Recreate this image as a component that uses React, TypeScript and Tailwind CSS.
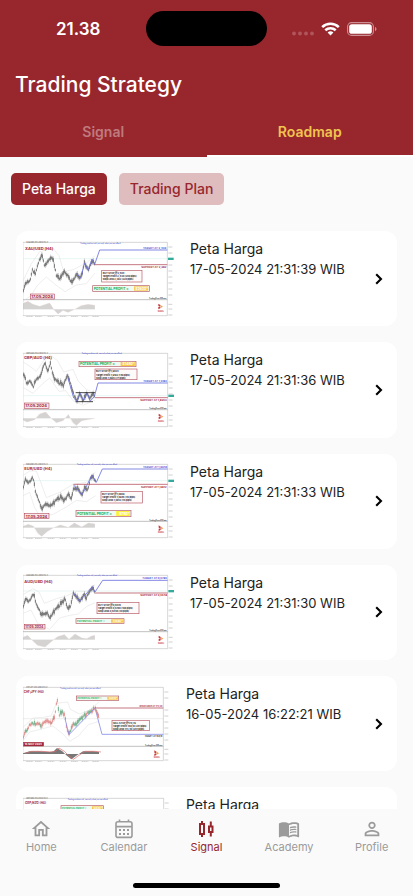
import React from "react";
import { MdMenuBook, MdOutlineHome, MdPersonOutline } from "react-icons/md";

type Pt = [number, number];

interface Label {
  x: number;
  y: number;
  text: string;
  size: number;
  color: string;
  anchor?: "start" | "end";
}

interface ChartSpec {
  w: number;
  axis: number;
  pair: string;
  pairAt: Pt;
  date: string;
  dateBox: [number, number, number, number];
  solidDate?: boolean;
  price: Pt[];
  colored?: boolean;
  band: Pt[][];
  plan: Pt[];
  planEnd: number;
  level: { y: number; from: number; to: number };
  labels: Label[];
  info: { x: number; y: number; w: number; h: number; lines: string[] };
  profit: { x: number; y: number; w: number; h: number; value: string; size: number; yellow?: boolean };
  now: number;
  split: number;
  hist: Pt[];
  zero: number;
  note: Pt;
  box?: [number, number, number, number];
}

interface Signal {
  title: string;
  time: string;
  chart: ChartSpec;
}

const RED = "#a3293a";
const BLUE = "#4a51d6";

const charts: ChartSpec[] = [
  {
    w: 453, axis: 433, pair: "XAU/USD (H4)", pairAt: [6, 26],
    date: "17.05.2024", dateBox: [22, 159, 72, 15],
    price: [[0, 148], [12, 118], [20, 122], [28, 88], [36, 98], [46, 68], [56, 38], [64, 76], [76, 62], [86, 50], [92, 62], [100, 106], [112, 112], [122, 92], [132, 104], [142, 118], [150, 122], [160, 98], [170, 110], [178, 92], [184, 66], [196, 88], [207, 58], [216, 70]],
    band: [[[0, 120], [24, 70], [50, 32], [90, 22], [108, 44], [122, 92], [150, 86], [190, 66], [216, 44]], [[0, 180], [24, 164], [44, 132], [70, 108], [96, 130], [126, 152], [160, 132], [190, 128], [216, 96]]],
    plan: [[162, 98], [174, 112], [184, 66], [195, 88], [207, 54], [215, 70], [230, 27]], planEnd: 433,
    level: { y: 71, from: 213, to: 433 },
    labels: [{ x: 430, y: 23, text: "TARGET AT 2,430", size: 8, color: BLUE, anchor: "end" }, { x: 430, y: 81, text: "SUPPORT AT 2,382", size: 8, color: RED, anchor: "end" }],
    info: { x: 236, y: 88, w: 121, h: 35, lines: ["BUY STOP @2,404", "Target Profit 2,430 (260 pips)", "Stop Loss 2,382 (220 pips)"] },
    profit: { x: 209, y: 134, w: 170, h: 17, value: "$2600*", size: 10 },
    now: 53, split: 176,
    hist: [[0, 187], [15, 181], [30, 190], [50, 196], [80, 186], [92, 205], [105, 219], [120, 208], [135, 214], [155, 205], [175, 194], [195, 190], [216, 193]], zero: 205,
    note: [172, 8],
  },
  {
    w: 453, axis: 434, pair: "GBP/AUD (H4)", pairAt: [3, 22],
    date: "17.05.2024", dateBox: [4, 153, 74, 16],
    price: [[0, 62], [10, 90], [22, 88], [30, 106], [38, 82], [48, 80], [56, 58], [66, 34], [74, 62], [82, 36], [90, 72], [98, 86], [112, 94], [122, 100], [132, 72], [142, 92], [152, 130], [162, 146], [170, 122], [180, 146], [190, 124], [200, 140], [208, 124], [216, 134]],
    band: [[[0, 30], [20, 42], [40, 58], [62, 26], [80, 8], [104, 26], [122, 60], [150, 52], [166, 88], [190, 112], [216, 124]], [[0, 106], [30, 124], [60, 94], [80, 78], [108, 118], [128, 116], [150, 146], [180, 160], [216, 144]]],
    plan: [[132, 68], [152, 138], [162, 148], [172, 124], [182, 146], [192, 124], [202, 147], [214, 134], [225, 93]], planEnd: 434,
    level: { y: 137, from: 216, to: 434 },
    labels: [{ x: 432, y: 89, text: "TARGET AT 1,9182", size: 8, color: BLUE, anchor: "end" }, { x: 431, y: 148, text: "SUPPORT AT 1,8963", size: 8, color: RED, anchor: "end" }],
    info: { x: 216, y: 51, w: 126, h: 32, lines: ["BUY STOP @1,9034", "Target Profit 1,9182 (148 pips)", "Stop Loss 1,8963 (71 pips)"] },
    profit: { x: 168, y: 28, w: 171, h: 16, value: "$1480*", size: 10 },
    now: 131, split: 173,
    hist: [[0, 204], [12, 210], [35, 203], [50, 186], [68, 180], [84, 198], [100, 212], [120, 206], [136, 188], [150, 212], [160, 220], [176, 206], [216, 199]], zero: 199,
    note: [176, 6], box: [158, 122, 58, 27],
  },
  {
    w: 453, axis: 434, pair: "EUR/USD (H4)", pairAt: [4, 22],
    date: "17.05.2024", dateBox: [5, 152, 73, 15],
    price: [[0, 72], [8, 48], [18, 58], [30, 44], [38, 88], [48, 118], [58, 138], [68, 124], [80, 132], [92, 120], [104, 108], [114, 102], [124, 114], [136, 96], [144, 106], [152, 78], [164, 74], [176, 94], [186, 72], [194, 84], [202, 46], [208, 38], [218, 58]],
    band: [[[0, 38], [20, 24], [40, 24], [54, 60], [70, 104], [110, 88], [150, 64], [190, 58], [218, 26]], [[0, 98], [20, 88], [34, 132], [52, 162], [90, 154], [130, 132], [160, 112], [190, 116], [218, 98]]],
    plan: [[152, 66], [177, 96], [207, 36], [220, 58], [238, 18]], planEnd: 434,
    level: { y: 64, from: 151, to: 434 },
    labels: [{ x: 433, y: 15, text: "TARGET AT 1,0946", size: 8, color: BLUE, anchor: "end" }, { x: 431, y: 74, text: "SUPPORT AT 1,0812", size: 8, color: RED, anchor: "end" }],
    info: { x: 234, y: 85, w: 124, h: 35, lines: ["BUY STOP @1,0868", "Target Profit 1,0946 (78 pips)", "Stop Loss 1,0812 (56 pips)"] },
    profit: { x: 159, y: 142, w: 165, h: 19, value: "$780*", size: 10, yellow: true },
    now: 53, split: 175,
    hist: [[0, 190], [16, 184], [32, 190], [44, 210], [56, 220], [72, 206], [90, 195], [112, 186], [136, 193], [154, 180], [176, 192], [196, 180], [216, 183]], zero: 194,
    note: [162, 6],
  },
  {
    w: 453, axis: 434, pair: "AUD/USD (H4)", pairAt: [4, 26],
    date: "17.05.2024", dateBox: [4, 152, 62, 13],
    price: [[0, 96], [10, 72], [18, 82], [32, 60], [42, 98], [52, 116], [62, 124], [72, 118], [80, 136], [90, 116], [104, 100], [116, 86], [126, 76], [134, 108], [142, 96], [150, 60], [160, 66], [170, 80], [182, 62], [190, 72], [200, 52], [208, 40], [216, 56]],
    band: [[[0, 62], [30, 44], [48, 54], [64, 88], [100, 74], [130, 66], [160, 52], [190, 52], [216, 32]], [[0, 118], [24, 108], [44, 148], [80, 166], [110, 132], [140, 124], [166, 120], [190, 98], [216, 86]]],
    plan: [[151, 56], [170, 82], [208, 38], [216, 54], [239, 19]], planEnd: 434,
    level: { y: 57, from: 215, to: 434 },
    labels: [{ x: 432, y: 16, text: "TARGET AT 0,6786", size: 8, color: BLUE, anchor: "end" }, { x: 433, y: 67, text: "SUPPORT AT 0,6648", size: 8, color: RED, anchor: "end" }],
    info: { x: 222, y: 85, w: 126, h: 34, lines: ["BUY STOP @0,6678", "Target Profit 0,6786 (108 pips)", "Stop Loss 0,6648 (30 pips)"] },
    profit: { x: 159, y: 134, w: 144, h: 14, value: "$1080*", size: 8 },
    now: 51, split: 173,
    hist: [[0, 190], [14, 184], [26, 197], [44, 214], [66, 219], [86, 202], [104, 188], [124, 182], [138, 196], [156, 180], [176, 192], [192, 194], [206, 186], [216, 184]], zero: 197,
    note: [162, 6],
  },
  {
    w: 441, axis: 421, pair: "CHF/JPY (H4)", pairAt: [2, 22],
    date: "16 MAY 2024", dateBox: [2, 169, 60, 11], solidDate: true, colored: true,
    price: [[0, 152], [10, 132], [20, 116], [36, 112], [56, 118], [70, 106], [84, 114], [96, 88], [102, 38], [108, 86], [118, 78], [126, 92], [132, 136], [138, 146], [146, 120], [160, 112], [172, 96], [186, 88], [200, 78], [216, 66], [222, 78], [228, 96]],
    band: [[[0, 124], [30, 96], [60, 94], [84, 90], [100, 52], [134, 48], [142, 70], [170, 84], [200, 72], [228, 48]], [[0, 164], [20, 138], [60, 128], [90, 120], [120, 144], [140, 166], [166, 150], [196, 116], [228, 106]]],
    plan: [[126, 98], [138, 146], [216, 66], [237, 145]], planEnd: 421,
    level: { y: 66, from: 216, to: 421 },
    labels: [{ x: 418, y: 64, text: "RESISTANCE AT 173,40", size: 6, color: RED, anchor: "end" }, { x: 418, y: 153, text: "TARGET AT 168,18", size: 6, color: "#333", anchor: "end" }],
    info: { x: 267, y: 103, w: 112, h: 31, lines: ["SELL STOP @170,79", "Target Profit 168,18 (261 pips)", "Stop Loss 173,40 (261 pips)"] },
    profit: { x: 160, y: 30, w: 127, h: 13, value: "$2610*", size: 7 },
    now: 98, split: 181,
    hist: [[0, 202], [20, 196], [50, 196], [80, 198], [92, 196], [102, 186], [118, 196], [130, 208], [145, 220], [162, 208], [180, 196], [210, 196], [228, 198]], zero: 204,
    note: [112, 8],
  },
  {
    w: 441, axis: 422, pair: "GBP/NZD (H4)", pairAt: [6, 22],
    date: "16 MAY 2024", dateBox: [2, 169, 60, 11], solidDate: true, colored: true,
    price: [[0, 140], [40, 100], [90, 110], [140, 70], [228, 90]],
    band: [], plan: [[140, 80], [216, 66], [237, 145]], planEnd: 422,
    level: { y: 76, from: 216, to: 422 },
    labels: [],
    info: { x: 267, y: 103, w: 112, h: 31, lines: ["SELL STOP @2,0650"] },
    profit: { x: 114, y: 26, w: 127, h: 13, value: "$1840*", size: 7 },
    now: 98, split: 181, hist: [[0, 200], [228, 200]], zero: 204,
    note: [134, 8],
  },
];

const times = [
  "17-05-2024 21:31:39 WIB",
  "17-05-2024 21:31:36 WIB",
  "17-05-2024 21:31:33 WIB",
  "17-05-2024 21:31:30 WIB",
  "16-05-2024 16:22:21 WIB",
  "16-05-2024 16:22:18 WIB",
];

const signals: Signal[] = charts.map((chart, i) => ({ title: "Peta Harga", time: times[i], chart }));

const toPath = (pts: Pt[]) => pts.map(([x, y], i) => `${i ? "L" : "M"}${x} ${y}`).join("");

function valueAt(pts: Pt[], x: number) {
  for (let i = 1; i < pts.length; i++) {
    const [x0, y0] = pts[i - 1];
    const [x1, y1] = pts[i];
    if (x <= x1) return y0 + ((y1 - y0) * (x - x0)) / (x1 - x0);
  }
  return pts[pts.length - 1][1];
}

function jitter(n: number) {
  const v = Math.sin(n * 12.9898) * 43758.5453;
  return v - Math.floor(v) - 0.5;
}

function Candles({ spec }: { spec: ChartSpec }) {
  const end = spec.price[spec.price.length - 1][0];
  const bars: React.ReactElement[] = [];
  for (let x = 1; x <= end; x += 3) {
    const mid = valueAt(spec.price, x) + jitter(x) * 7;
    const reach = 6 + Math.abs(jitter(x + 7)) * 12;
    const up = jitter(x + 3) > -0.1;
    const color = spec.colored ? (up ? "#4f9a6c" : "#dc7070") : "#4b4b4b";
    bars.push(
      <g key={x}>
        <path d={`M${x} ${mid - reach}V${mid + reach}`} stroke={color} strokeWidth={1.2} opacity={0.7} />
        <path d={`M${x} ${mid - reach / 2}V${mid + reach / 2}`} stroke={color} strokeWidth={2.2} />
      </g>,
    );
  }
  return <g>{bars}</g>;
}

function Histogram({ spec }: { spec: ChartSpec }) {
  const end = spec.hist[spec.hist.length - 1][0];
  if (spec.colored) {
    return (
      <g>
        <path d={`M0 ${spec.zero}${toPath(spec.hist).replace("M", "L")}L${end} ${spec.zero}Z`} fill="#777" />
        <path d={toPath(spec.hist)} fill="none" stroke="#e06a6a" strokeWidth={2} transform="translate(6 0)" />
      </g>
    );
  }
  let d = "";
  for (let x = 1; x <= end; x += 3) d += `M${x} ${spec.zero}V${valueAt(spec.hist, x)}`;
  return (
    <g fill="none">
      <path d={d} stroke="#b9b6b6" strokeWidth={2} />
      <path d={toPath(spec.hist)} stroke="#e6d3d3" strokeWidth={1} />
    </g>
  );
}

function Chart({ spec }: { spec: ChartSpec }) {
  const { axis, info, profit, dateBox, level } = spec;
  const ticks = [18, 36, 72, 90, 108, 126, 144, 162, 190, 204, 222];
  return (
    <svg
      viewBox={`0 0 ${spec.w} 228`}
      className="h-[76px] w-auto shrink-0"
      fontFamily="Inter, sans-serif"
      fontWeight={700}
      role="img"
      aria-label={spec.pair}
    >
      <g fill="none" stroke="#a8a8a8" strokeWidth={1.4}>
        <path d={`M0 4H${axis}V224`} />
        <path d={`M0 224H${axis}`} />
        <path d="M0 4V224" stroke="#bdbdbd" />
      </g>
      <path d={`M0 ${spec.split}H${axis}`} stroke="#999" strokeWidth={1.8} />
      <path d={`M0 ${spec.now}H${axis}`} stroke={spec.colored ? "#ccc" : "#b5e5df"} strokeWidth={1} />
      {!spec.colored && <rect x={axis + 2} y={spec.now - 3} width={17} height={7} fill="#35a99a" />}
      {ticks.map((y) => (
        <path key={y} d={`M${axis + 3} ${y}H${axis + 15}`} stroke="#b9b9b9" strokeWidth={2} />
      ))}
      {[10, 36, 74, 110, 144, 176, 208].map((x) => (
        <path key={x} d={`M${x} 227H${x + 20}`} stroke="#b5b5b5" strokeWidth={2} strokeDasharray="5 1" />
      ))}
      {spec.band.map((b, i) => (
        <polyline key={i} points={b.map((p) => p.join(",")).join(" ")} fill="none" stroke="#dcdcdc" strokeWidth={1.5} strokeLinejoin="round" />
      ))}
      <Candles spec={spec} />
      <Histogram spec={spec} />
      {spec.box && (
        <path
          d={`M${spec.box[0]} ${spec.box[1]}h${spec.box[2]}M${spec.box[0]} ${spec.box[1] + spec.box[3]}h${spec.box[2] - 6}`}
          stroke="#222"
          strokeWidth={2.5}
        />
      )}
      <path d={`M${level.from} ${level.y}H${level.to}`} stroke="#b04555" strokeWidth={2.2} />
      <path
        d={`${toPath(spec.plan)}H${spec.planEnd}`}
        fill="none"
        stroke={spec.colored ? "#8a8ee8" : "#6a70dd"}
        strokeWidth={2.5}
        strokeLinejoin="round"
      />
      {spec.colored && <path d={`M216 ${level.y}L228 96`} stroke="#e58a8a" strokeWidth={3} />}
      <text x={10} y={7} fontSize={5} fill="#777">{spec.pair} 240 O H L C</text>
      <text x={spec.note[0]} y={spec.note[1] + 1} fontSize={5} fontWeight={500} fill="#3f46d0">
        Trading involves risk, use only what you can afford
      </text>
      <text x={spec.pairAt[0]} y={spec.pairAt[1]} fontSize={spec.colored ? 9 : 12} fill={RED}>{spec.pair}</text>
      <rect x={dateBox[0]} y={dateBox[1]} width={dateBox[2]} height={dateBox[3]} fill={spec.solidDate ? RED : "#f8e6e8"} stroke={RED} strokeWidth={1.5} />
      <text x={dateBox[0] + 3} y={dateBox[1] + dateBox[3] - 3} fontSize={spec.solidDate ? 8 : dateBox[2] < 70 ? 10 : 12} fill={spec.solidDate ? "#fff" : RED}>
        {spec.date}
      </text>
      {spec.labels.map((l) => (
        <text key={l.text} x={l.x} y={l.y} fontSize={l.size} fill={l.color} textAnchor={l.anchor}>{l.text}</text>
      ))}
      <rect x={info.x} y={info.y} width={info.w} height={info.h} fill="#fffafa" stroke="#b65b67" strokeWidth={2} />
      {info.lines.map((line, i) => (
        <text key={line} x={info.x + 3} y={info.y + 10 + i * 10} fontSize={7} fill="#222">{line}</text>
      ))}
      <rect x={profit.x} y={profit.y} width={profit.w} height={profit.h} fill="#effaf3" stroke="#b65b67" strokeWidth={2} />
      <rect x={profit.x + profit.w * 0.73} y={profit.y + 2} width={profit.w * 0.25} height={profit.h - 4} fill={profit.yellow ? "#fdf23e" : "#fbc94a"} />
      <text x={profit.x + 3} y={profit.y + profit.h / 2 + profit.size * 0.36} fontSize={profit.size} fill="#12b058">
        POTENTIAL PROFIT =
      </text>
      <text x={profit.x + profit.w - 4} y={profit.y + profit.h / 2 + profit.size * 0.36} fontSize={profit.size} fill="#fff" textAnchor="end">
        {profit.value}
      </text>
      <text x={axis - 3} y={spec.split - 2} fontSize={5} fill="#333" textAnchor="end">TradingView 240 min</text>
      <g transform={`translate(${axis - 27} ${spec.split + 12})`}>
        <path d="M0 0L6 4V9L0 7Z M0 10L6 9V14L0 17Z" fill="#c9343f" />
        <path d="M5 3L14 9L5 14L8 9Z" fill="#f2a03d" />
        <text x={-2} y={24} fontSize={5} fill="#c9343f">SIGNAL</text>
      </g>
    </svg>
  );
}

function StatusBar() {
  return (
    <div className="flex h-[57px] items-center px-9">
      <div className="flex-1 text-[17px] font-semibold leading-6">
        <span className="ml-5">21.38</span>
      </div>
      <div className="h-[35px] w-[121px] rounded-full bg-black" />
      <div className="flex flex-1 items-center justify-end gap-[7px]">
        <svg width="22" height="14" viewBox="0 0 22 14" fill="#b0555c" aria-hidden="true">
          <circle cx="2" cy="11.5" r="1.9" />
          <circle cx="8" cy="11.5" r="1.9" />
          <circle cx="14" cy="11.5" r="1.9" />
          <circle cx="20" cy="11.5" r="1.9" />
        </svg>
        <svg width="19" height="14" viewBox="0 0 19 14" fill="none" stroke="#fff" strokeWidth="2.6" aria-hidden="true">
          <path d="M1.2 5.1a12 12 0 0 1 16.6 0" />
          <path d="M4.3 8.3a7.6 7.6 0 0 1 10.4 0" />
          <path d="M6.6 10.6a4.3 4.3 0 0 1 5.8 0L9.5 13.6Z" fill="#fff" stroke="none" />
        </svg>
        <svg width="30" height="14" viewBox="0 0 30 14" aria-hidden="true">
          <rect x="0.6" y="0.6" width="25.8" height="12.8" rx="4" fill="none" stroke="#cb8f94" strokeWidth="1.1" />
          <rect x="2.2" y="2.2" width="22.6" height="9.6" rx="2.6" fill="#fff" />
          <path d="M28 5v4.2c.9-.4 1.5-1.2 1.5-2.1S28.9 5.4 28 5z" fill="#cb8f94" />
        </svg>
      </div>
    </div>
  );
}

function SignalCard({ item }: { item: Signal }) {
  return (
    <a href="#detail" className="flex aspect-[4/1] items-center rounded-xl bg-white pl-[7px] pr-[13px]">
      <Chart spec={item.chart} />
      <div className="ml-4 flex-1 self-stretch pt-2 text-[13px] leading-5 text-[#222]">
        <div className="text-sm leading-5">{item.title}</div>
        <div className="whitespace-nowrap">{item.time}</div>
      </div>
      <svg width="10" height="14" viewBox="0 0 10 14" fill="none" stroke="#000" strokeWidth="2.1" aria-hidden="true">
        <path d="M2.2 2.2L7 7L2.2 11.8" />
      </svg>
    </a>
  );
}

function CalendarIcon() {
  return (
    <svg width="22" height="22" viewBox="0 0 22 22" fill="none" stroke="currentColor" strokeWidth="1.6" aria-hidden="true">
      <rect x="3" y="3.8" width="16" height="15.6" rx="2" />
      <path d="M3 8.6H19M6.5 1.5V4M15.5 1.5V4" />
      <g fill="currentColor" stroke="none">
        <rect x="6" y="11" width="2" height="2" />
        <rect x="10" y="11" width="2" height="2" />
        <rect x="14" y="11" width="2" height="2" />
        <rect x="6" y="15" width="2" height="2" />
        <rect x="10" y="15" width="2" height="2" />
        <rect x="14" y="15" width="2" height="2" />
      </g>
    </svg>
  );
}

function CandleIcon() {
  return (
    <svg width="22" height="22" viewBox="0 0 22 22" fill="none" stroke="currentColor" strokeWidth="2" aria-hidden="true">
      <rect x="5" y="6" width="4" height="10" />
      <path d="M7 3V6M7 16V19" />
      <rect x="14" y="8.5" width="3.5" height="5.5" />
      <path d="M15.8 3.5V8.5M15.8 14V18.5" />
    </svg>
  );
}

const navItems = [
  { label: "Home", icon: <MdOutlineHome size={22} /> },
  { label: "Calendar", icon: <CalendarIcon /> },
  { label: "Signal", icon: <CandleIcon />, active: true },
  { label: "Academy", icon: <MdMenuBook size={22} /> },
  { label: "Profile", icon: <MdPersonOutline size={22} /> },
];

export default function App() {
  return (
    <div className="flex h-screen flex-col overflow-hidden bg-[#fafafa] font-['Inter',sans-serif]">
      <header className="shrink-0 bg-[#97272d] text-white">
        <StatusBar />
        <h1 className="px-[15px] pt-3 text-[21px] font-medium leading-8">Trading Strategy</h1>
        <div role="tablist" className="mt-2 flex h-12 text-sm font-semibold">
          <button role="tab" aria-selected="false" className="flex-1 border-b-2 border-transparent text-[#c07a7e]">
            Signal
          </button>
          <button role="tab" aria-selected="true" className="flex-1 border-b-2 border-white text-[#f1c350]">
            Roadmap
          </button>
        </div>
      </header>

      <main className="min-h-0 flex-1 overflow-hidden">
        <div className="flex gap-3 px-[11px] pt-4 text-sm font-medium">
          <button className="h-8 rounded-[5px] bg-[#97272d] px-[11px] text-white">Peta Harga</button>
          <button className="h-8 rounded-[5px] bg-[#dfbcbe] px-[11px] text-[#97272d]">Trading Plan</button>
        </div>
        <div className="mt-[26px] flex flex-col gap-4 px-4">
          {signals.map((item) => (
            <SignalCard key={item.time} item={item} />
          ))}
        </div>
      </main>

      <nav className="flex h-[87px] shrink-0 flex-col bg-[#fafafa]">
        <div className="flex pt-[9px]">
          {navItems.map((n) => (
            <a
              key={n.label}
              href={`#${n.label.toLowerCase()}`}
              className={`flex flex-1 flex-col items-center text-[11px] leading-[14px] ${n.active ? "text-[#97272d]" : "text-[#9b9b9b]"}`}
            >
              {n.icon}
              {n.label}
            </a>
          ))}
        </div>
        <div className="mx-auto mb-2 mt-auto h-[5px] w-[147px] rounded-full bg-black" />
      </nav>
    </div>
  );
}
